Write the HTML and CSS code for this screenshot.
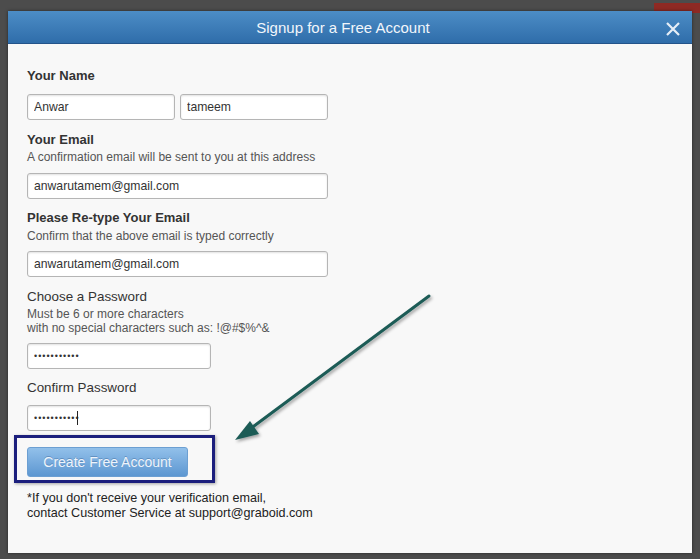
FILE: index.html
```html
<!DOCTYPE html>
<html>
<head>
<meta charset="utf-8">
<link rel="stylesheet" href="styles.css">
</head>
<body>
<div class="backdrop-tab"></div>
<div class="modal">
  <div class="modal-header">
    <span class="modal-title">Signup for a Free Account</span>
    <svg class="close" width="14" height="14" viewBox="0 0 14 14"><path d="M1 1L13 13M13 1L1 13" stroke="#e6eef7" stroke-width="2.2" fill="none"/></svg>
  </div>
  <div class="modal-body">
    <div class="label bold l-name">Your Name</div>
    <div class="row">
      <input class="field half" type="text" value="Anwar" readonly>
      <input class="field half" type="text" value="tameem" readonly>
    </div>
    <div class="label bold l-email">Your Email</div>
    <div class="hint h-email">A confirmation email will be sent to you at this address</div>
    <input class="field wide f-email" type="text" value="anwarutamem@gmail.com" readonly>
    <div class="label bold l-retype">Please Re-type Your Email</div>
    <div class="hint h-retype">Confirm that the above email is typed correctly</div>
    <input class="field wide f-retype" type="text" value="anwarutamem@gmail.com" readonly>
    <div class="label plain l-pass">Choose a Password</div>
    <div class="hint h-pass">Must be 6 or more characters<br>with no special characters such as: !@#$%^&amp;</div>
    <input class="field mid f-pass" type="password" value="abcdefghijk" readonly>
    <div class="label plain l-confirm">Confirm Password</div>
    <div class="caret-wrap">
      <input class="field mid f-confirm" type="password" value="abcdefghijk" readonly>
      <span class="caret"></span>
    </div>
    <div class="highlight">
      <button class="create">Create Free Account</button>
    </div>
    <p class="footer-note">*If you don't receive your verification email,<br>contact Customer Service at support@graboid.com</p>
  </div>
  <svg class="arrow" width="700" height="559" viewBox="0 0 700 559">
    <defs>
      <filter id="sh" x="-20%" y="-20%" width="140%" height="140%">
        <feDropShadow dx="1.5" dy="2" stdDeviation="1.5" flood-color="#000" flood-opacity="0.35"/>
      </filter>
    </defs>
    <g filter="url(#sh)">
      <path d="M429 296 L250 429" stroke="#1f5b57" stroke-width="3" stroke-linecap="round" fill="none"/>
      <path d="M235 440 L250 421 L259 434 Z" fill="#1f5b57"/>
    </g>
  </svg>
</div>
</body>
</html>
```
FILE: styles.css
```css
* { box-sizing: border-box; }
html, body { margin: 0; padding: 0; }
body {
  width: 700px;
  height: 559px;
  overflow: hidden;
  background: #4c4c4c;
  font-family: "Liberation Sans", Arial, sans-serif;
  position: relative;
}
.backdrop-tab {
  position: absolute;
  left: 654px;
  top: 3px;
  width: 46px;
  height: 10px;
  background: #8e2a24;
}
.modal {
  position: relative;
  margin: 11px 0 0 8px;
  width: 684px;
  height: 542px;
  background: #f8f8f8;
  box-shadow: 0 0 3px rgba(0,0,0,0.5);
}
.modal-header {
  height: 33px;
  background: linear-gradient(#4c8dc6, #2f6daa);
  border-bottom: 1px solid #24548a;
  display: flex;
  align-items: center;
  justify-content: center;
  padding-right: 14px;
  position: relative;
}
.modal-title {
  color: #f2f6fb;
  font-size: 15px;
  margin-top: 1px;
}
.close {
  position: absolute;
  right: 12px;
  top: 11px;
}
.modal-body {
  padding: 24px 0 0 19px;
  display: flex;
  flex-direction: column;
  align-items: flex-start;
  color: #333;
}
.label {
  font-size: 13px;
  line-height: 16px;
  color: #333;
}
.bold { font-weight: bold; }
.plain { font-size: 13.4px; }
.hint {
  font-size: 12px;
  line-height: 15px;
  color: #555;
}
.row {
  display: flex;
  gap: 5px;
  margin-top: 10px;
}
.field {
  height: 26px;
  border: 1px solid #b5b5b5;
  border-radius: 3px;
  background: #fff;
  box-shadow: inset 0 1px 2px rgba(0,0,0,0.12);
  font-family: "Liberation Sans", Arial, sans-serif;
  font-size: 12.2px;
  color: #333;
  padding: 0 6px;
  outline: none;
  margin: 0;
}
.half { width: 148px; }
.wide { width: 301px; }
.mid { width: 184px; }
.l-email { margin-top: 12px; }
.h-email { margin-top: 2px; }
.f-email { margin-top: 8px; }
.l-retype { margin-top: 11px; }
.h-retype { margin-top: 3px; }
.f-retype { margin-top: 7px; }
.l-pass { margin-top: 12px; }
.h-pass { margin-top: 2px; line-height: 14px; }
.f-pass { margin-top: 8px; font-size: 9px; letter-spacing: 1px; }
.l-confirm { margin-top: 11px; }
.caret-wrap {
  position: relative;
  margin-top: 9px;
}
.f-confirm { font-size: 9px; letter-spacing: 1px; }
.caret {
  position: absolute;
  left: 50px;
  top: 6px;
  width: 1px;
  height: 14px;
  background: #222;
}
.highlight {
  margin: 4px 0 0 -13px;
  border: 3px solid #1c1f7d;
  padding: 9px 24px 3px 10px;
  box-shadow: 1px 1px 3px rgba(0,0,0,0.35);
}
.create {
  display: block;
  width: 161px;
  height: 30px;
  border: 1px solid #6c9fd2;
  border-radius: 3px;
  background: linear-gradient(#92c0ea, #5d97d1);
  color: #eef4fb;
  font-family: "Liberation Sans", Arial, sans-serif;
  font-size: 14px;
  text-shadow: 0 -1px 0 rgba(40,80,130,0.35);
  padding: 0;
  margin: 0;
}
.footer-note {
  margin: 8px 0 0 0;
  font-size: 12.6px;
  line-height: 15px;
  color: #222;
}
.arrow {
  position: absolute;
  left: -8px;
  top: -11px;
  pointer-events: none;
}
```
